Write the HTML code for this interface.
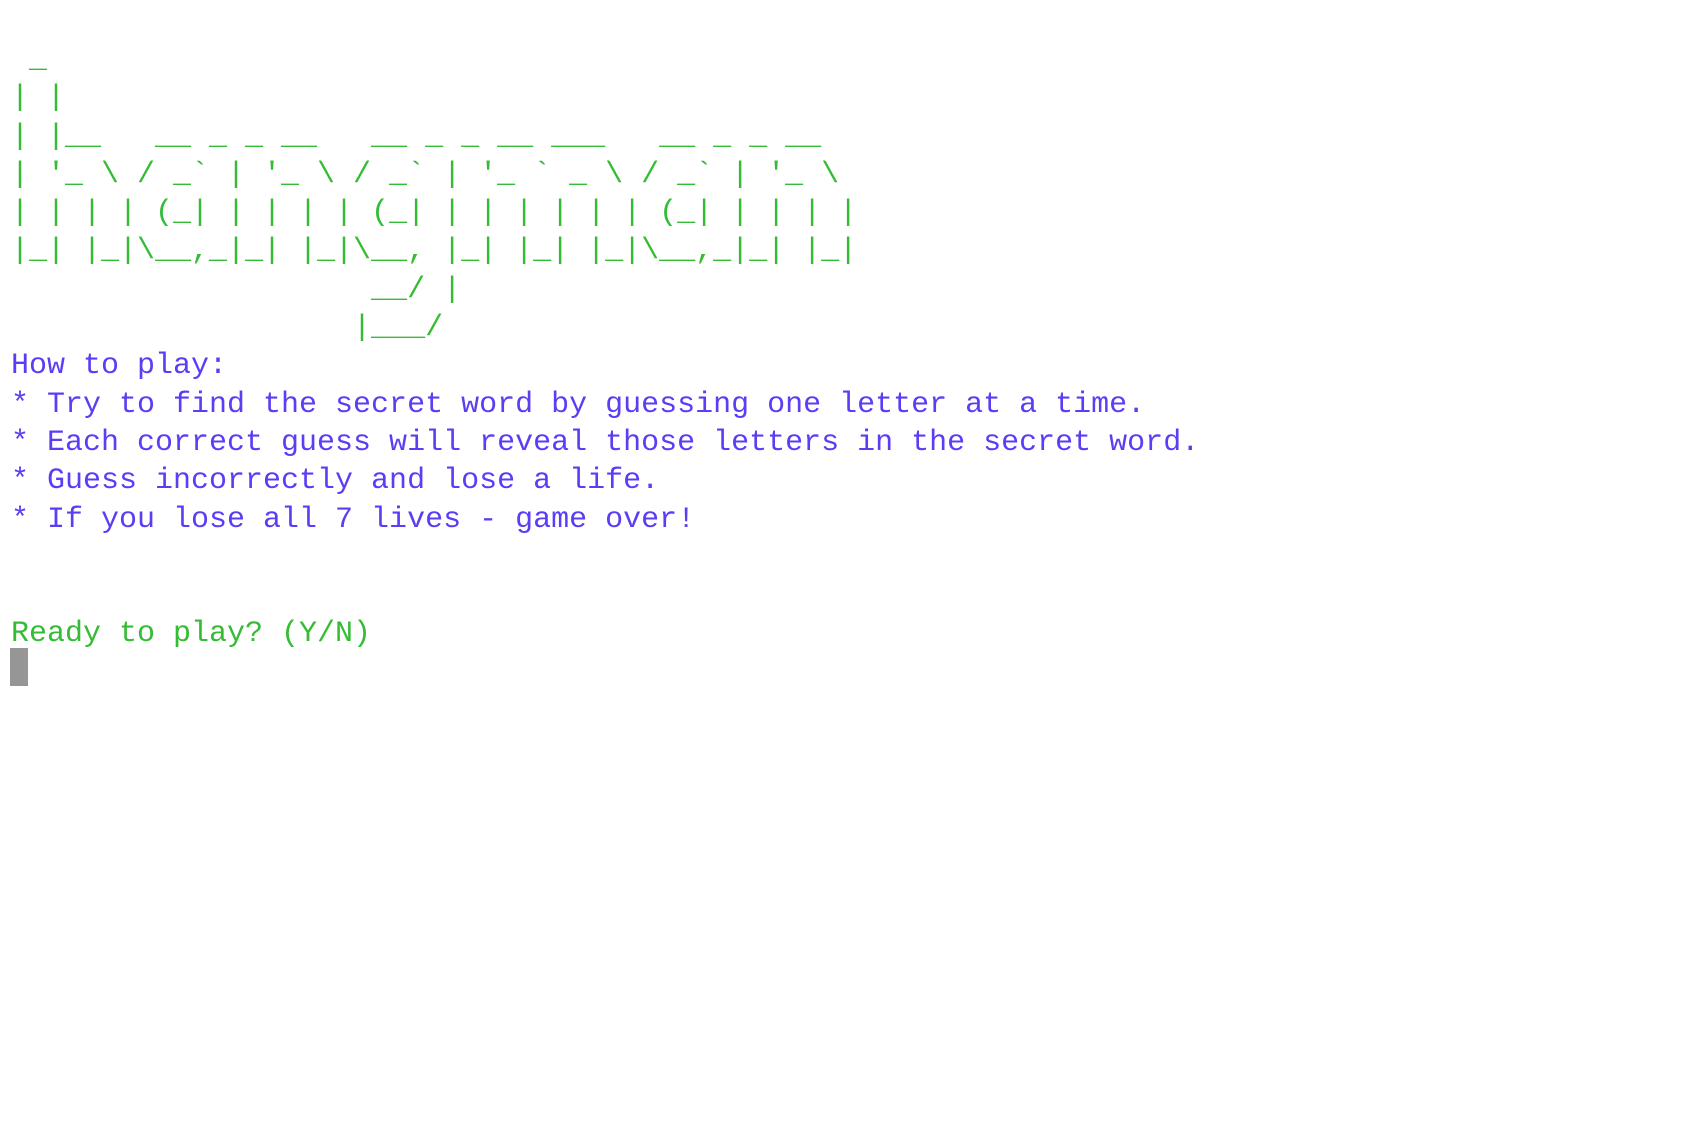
<!DOCTYPE html>
<html><head><meta charset="utf-8"><style>
html,body{margin:0;padding:0;background:#fff;width:1705px;height:1135px;overflow:hidden}
pre{margin:0;position:absolute;left:11px;top:41px;font-family:"Liberation Mono",monospace;font-size:30px;line-height:38.3px;color:#34bc34;white-space:pre}
.p{color:#5a3ef5}
.cur{position:absolute;left:10px;top:648px;width:18px;height:38px;background:#969696}
</style></head><body>
<pre> _
| |
| |__   __ _ _ __   __ _ _ __ ___   __ _ _ __
| '_ \ / _` | '_ \ / _` | '_ ` _ \ / _` | '_ \
| | | | (_| | | | | (_| | | | | | | (_| | | | |
|_| |_|\__,_|_| |_|\__, |_| |_| |_|\__,_|_| |_|
                    __/ |
                   |___/
<span class="p">How to play:
* Try to find the secret word by guessing one letter at a time.
* Each correct guess will reveal those letters in the secret word.
* Guess incorrectly and lose a life.
* If you lose all 7 lives - game over!</span>


Ready to play? (Y/N)</pre>
<div class="cur"></div>
</body></html>
